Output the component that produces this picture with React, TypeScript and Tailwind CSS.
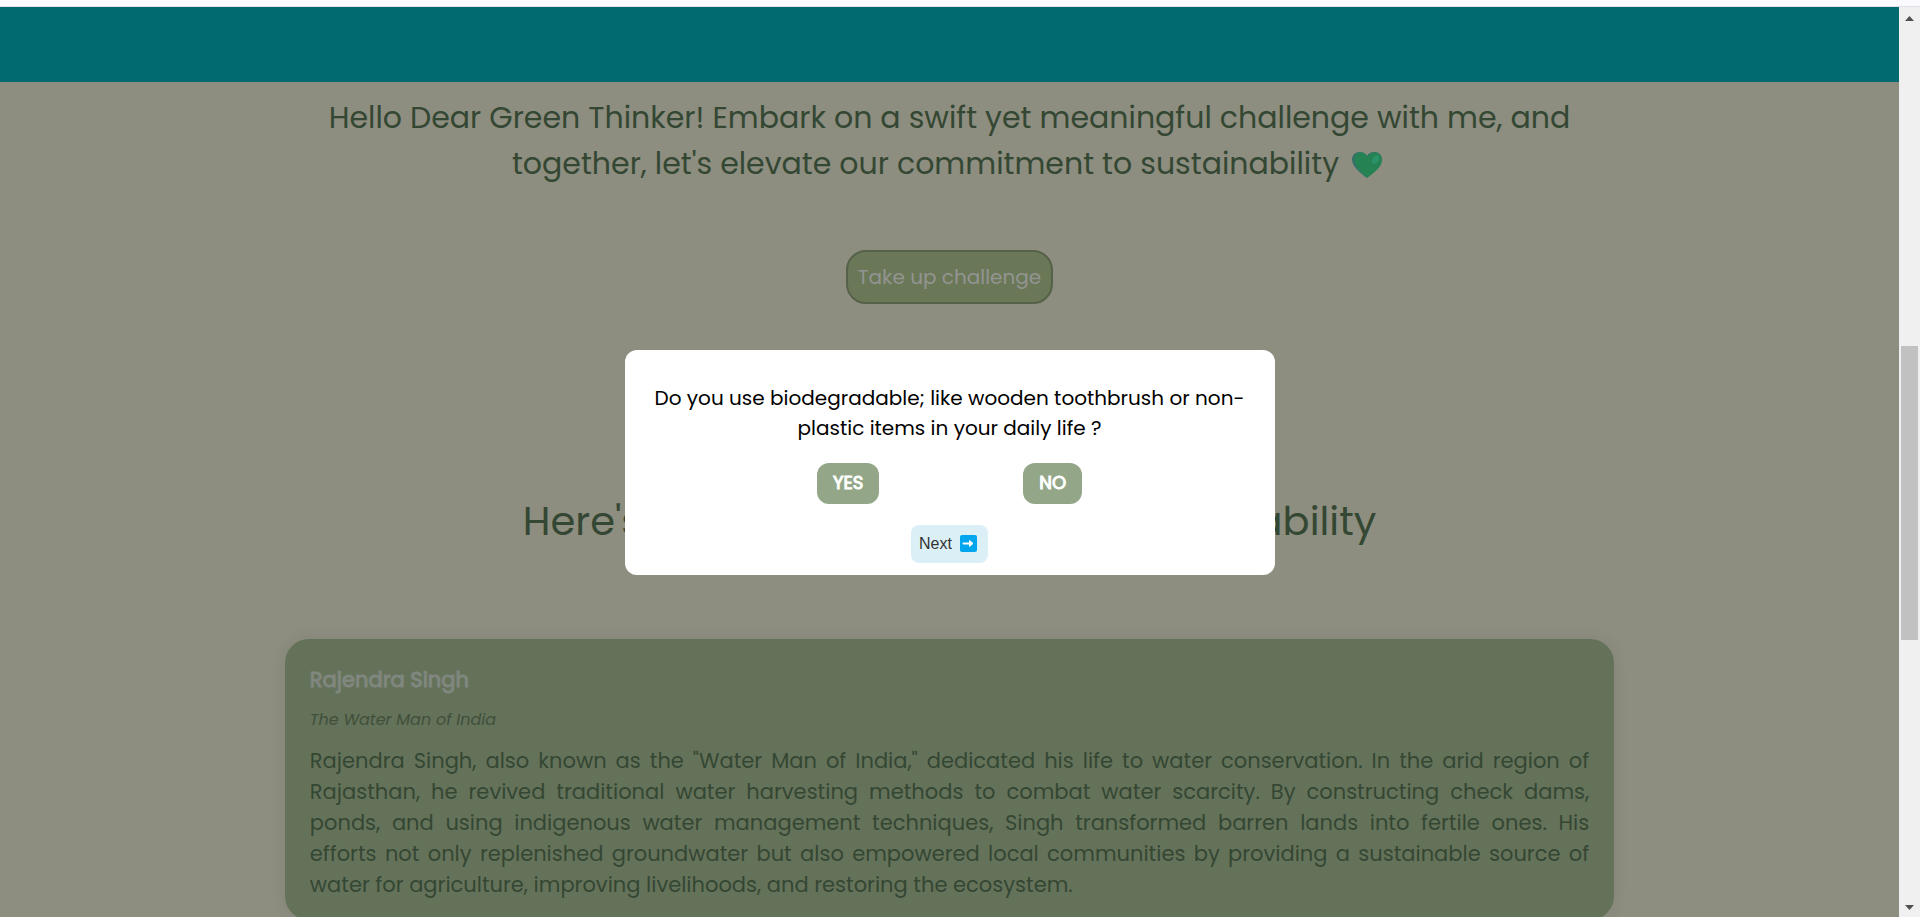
import React, { useState } from 'react';

interface Person {
  name: string;
  title: string;
  story: string;
}

const people: Person[] = [
  {
    name: 'Rajendra Singh',
    title: 'The Water Man of India',
    story:
      'Rajendra Singh, also known as the "Water Man of India," dedicated his life to water conservation. In the arid region of Rajasthan, he revived traditional water harvesting methods to combat water scarcity. By constructing check dams, ponds, and using indigenous water management techniques, Singh transformed barren lands into fertile ones. His efforts\u00a0not\u00a0only replenished groundwater but also empowered local communities by providing a sustainable source of water for agriculture, improving livelihoods, and restoring the ecosystem.'
  }
];

const GreenHeart: React.FC = () => (
  <svg viewBox="0 0 32 32" className="mr-1 ml-3 inline-block size-8 align-[-7px]" aria-hidden="true">
    <path d="M16 29C12.500 26 1 19 1 10.500C1 6 4.500 3 8.500 3C12 3 14.800 4.500 16 7C17.200 4.500 20 3 23.500 3C27.500 3 31 6 31 10.500C31 19 19.500 26 16 29Z" fill="#33706a" />
    <path d="M16.500 28.500C13 25.500 3.500 19 3.500 10.500C3.500 6.500 6.500 3.500 10 3.500C13 3.500 15 5 16.500 8C18 5.500 20.500 3.500 24 3.500C27.500 3.500 31 6.500 31 10.500C31 19 20 25.500 16.500 28.500Z" fill="#258353" />
    <ellipse cx="24.500" cy="10.500" rx="3" ry="5" transform="rotate(35 24.500 10.500)" fill="#2a9268" />
  </svg>
);

const ArrowIcon: React.FC = () => (
  <svg viewBox="0 0 17 17" className="size-[17px]" aria-hidden="true">
    <rect width="17" height="17" rx="2" fill="#00a6ed" />
    <path d="M3.500 8.500H10" stroke="#fff" strokeWidth="2" strokeLinecap="round" />
    <path d="M9.500 5.500L13 8.500L9.500 11.500Z" fill="#fff" stroke="#fff" strokeWidth="1" strokeLinejoin="round" />
  </svg>
);

const PersonCard: React.FC<{ person: Person }> = ({ person }) => (
  <article className="mx-auto w-[70%] rounded-3xl bg-[#65725a] px-[25px] pt-[25px] pb-5 text-[#344733] shadow-[0_0_16px_rgba(0,0,0,0.08)]">
    <h3 className="text-[21px] leading-8 font-normal text-[#80877f] [-webkit-text-stroke:1px]">{person.name}</h3>
    <p className="mt-3 text-base leading-6 text-[#3f4f3a] italic">{person.title}</p>
    <p className="mt-[13px] text-justify text-[21px] leading-[31px]">{person.story}</p>
  </article>
);

const QuestionDialog: React.FC<{ onNext: () => void }> = ({ onNext }) => {
  const answerClass = 'h-[41px] rounded-xl bg-[#93a788] px-4 text-lg text-white [-webkit-text-stroke:1px]';

  return (
    <div className="absolute inset-0 flex items-center justify-center">
      <div role="dialog" aria-label="Challenge question" className="w-[650px] rounded-xl bg-white px-6 pt-[33px] pb-3 text-center text-black">
        <p className="text-xl leading-[30px]">
          Do you use biodegradable; like wooden toothbrush or non-plastic items in your daily life ?
        </p>
        <div className="mt-5 flex justify-center gap-36">
          <button type="button" className={answerClass}>YES</button>
          <button type="button" className={answerClass}>NO</button>
        </div>
        <button
          type="button"
          onClick={onNext}
          className="mx-auto mt-[21px] flex h-[38px] items-center gap-2 rounded-lg bg-[#dbeff7] pr-[11px] pl-2 font-['Liberation_Sans',Arial,sans-serif] text-base text-[#333333]"
        >
          Next
          <ArrowIcon />
        </button>
      </div>
    </div>
  );
};

const ScrollRail: React.FC = () => (
  <div className="flex w-[21px] shrink-0 flex-col items-center justify-between bg-[#f0f0f0] pt-[9px] pb-[7px]" aria-hidden="true">
    <svg viewBox="0 0 9 5" className="h-[5px] w-[9px]"><path d="M0 5L4.500 0L9 5Z" fill="#505050" /></svg>
    <div className="flex w-[17px] grow flex-col">
      <div className="grow-[324]" />
      <div className="h-1/3 bg-[#c1c1c1]" />
      <div className="grow-[264]" />
    </div>
    <svg viewBox="0 0 9 5" className="h-[5px] w-[9px]"><path d="M0 0L4.500 5L9 0Z" fill="#505050" /></svg>
  </div>
);

const App: React.FC = () => {
  const [showQuestion, setShowQuestion] = useState(true);

  return (
    <div className="flex h-screen flex-col overflow-hidden font-['Poppins','Inter',sans-serif]">
      <div className="h-[7px] shrink-0 border-b border-[#dfe1e8] bg-[#fbfaff]" />
      <div className="flex min-h-0 grow">
        <div className="relative grow overflow-hidden bg-[#8d8e80] text-[#344733]">
          <header className="h-[75px] bg-[#006a70]" />
          <main>
            <section className="mx-auto w-[68%] pt-[13px] text-center">
              <p className="text-3xl leading-[46px]">
                Hello Dear Green Thinker! Embark on a swift yet meaningful challenge with me, and together, let's elevate our commitment to sustainability
                <GreenHeart />
              </p>
              <button
                type="button"
                onClick={() => setShowQuestion(true)}
                className="mt-[63px] h-[54px] rounded-[20px] border-2 border-[#566149] bg-[#6a7858] px-[10px] text-xl text-[#939492]"
              >
                Take up challenge
              </button>
            </section>
            <h2 className="mt-[187px] text-center text-[40px] leading-[60px]">
              Here's an inspiration towards sustainability
            </h2>
            <div className="mt-[88px]">
              {people.map(person => (
                <PersonCard key={person.name} person={person} />
              ))}
            </div>
          </main>
          {showQuestion && <QuestionDialog onNext={() => setShowQuestion(false)} />}
        </div>
        <ScrollRail />
      </div>
    </div>
  );
};

export default App;
